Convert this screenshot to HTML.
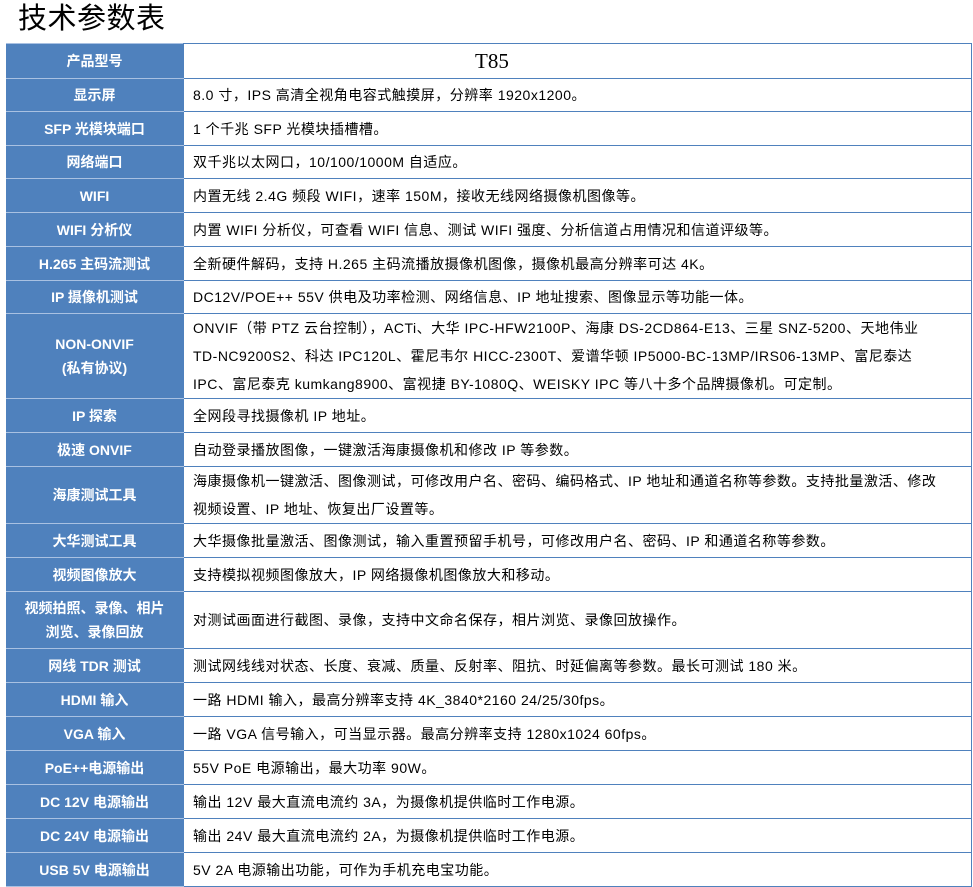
<!DOCTYPE html>
<html><head><meta charset="utf-8"><style>
body{margin:0;background:#fff;font-family:"Liberation Sans","Noto Sans CJK SC",sans-serif;}
h1{position:absolute;left:18px;top:1px;margin:0;font-size:29px;font-weight:normal;color:#000;line-height:36px;letter-spacing:0.5px;}
table{position:absolute;left:6px;top:43px;width:966px;border-collapse:collapse;table-layout:fixed;}
td{padding:0;font-size:14px;color:#000;}
td.k{width:177px;background:#4f81bd;color:#fff;font-weight:bold;text-align:center;border-top:1px solid #a9c1e2;border-bottom:1px solid #a9c1e2;border-right:1px solid #4f81bd;line-height:24px;}
td.v{border:1px solid #4f81bd;padding-left:9px;line-height:28px;letter-spacing:0.5px;white-space:nowrap;}
</style></head><body>
<h1>技术参数表</h1>
<table>
<tr style="height:35px"><td class="k">产品型号</td><td class="v" style="font-family:'Liberation Serif',serif;font-size:21px;padding-left:291px;letter-spacing:0">T85</td></tr>
<tr style="height:33px"><td class="k">显示屏</td><td class="v">8.0 寸，IPS 高清全视角电容式触摸屏，分辨率 1920x1200。</td></tr>
<tr style="height:34px"><td class="k">SFP 光模块端口</td><td class="v">1 个千兆 SFP 光模块插槽槽。</td></tr>
<tr style="height:33px"><td class="k">网络端口</td><td class="v">双千兆以太网口，10/100/1000M 自适应。</td></tr>
<tr style="height:34px"><td class="k">WIFI</td><td class="v">内置无线 2.4G 频段 WIFI，速率 150M，接收无线网络摄像机图像等。</td></tr>
<tr style="height:34px"><td class="k">WIFI 分析仪</td><td class="v">内置 WIFI 分析仪，可查看 WIFI 信息、测试 WIFI 强度、分析信道占用情况和信道评级等。</td></tr>
<tr style="height:34px"><td class="k">H.265 主码流测试</td><td class="v">全新硬件解码，支持 H.265 主码流播放摄像机图像，摄像机最高分辨率可达 4K。</td></tr>
<tr style="height:33px"><td class="k">IP 摄像机测试</td><td class="v">DC12V/POE++ 55V 供电及功率检测、网络信息、IP 地址搜索、图像显示等功能一体。</td></tr>
<tr style="height:85px"><td class="k">NON-ONVIF<br>(私有协议)</td><td class="v">ONVIF（带 PTZ 云台控制），ACTi、大华 IPC-HFW2100P、海康 DS-2CD864-E13、三星 SNZ-5200、天地伟业<br>TD-NC9200S2、科达 IPC120L、霍尼韦尔 HICC-2300T、爱谱华顿 IP5000-BC-13MP/IRS06-13MP、富尼泰达<br>IPC、富尼泰克 kumkang8900、富视捷 BY-1080Q、WEISKY IPC 等八十多个品牌摄像机。可定制。</td></tr>
<tr style="height:34px"><td class="k">IP 探索</td><td class="v">全网段寻找摄像机 IP 地址。</td></tr>
<tr style="height:34px"><td class="k">极速 ONVIF</td><td class="v">自动登录播放图像，一键激活海康摄像机和修改 IP 等参数。</td></tr>
<tr style="height:57px"><td class="k">海康测试工具</td><td class="v">海康摄像机一键激活、图像测试，可修改用户名、密码、编码格式、IP 地址和通道名称等参数。支持批量激活、修改<br>视频设置、IP 地址、恢复出厂设置等。</td></tr>
<tr style="height:34px"><td class="k">大华测试工具</td><td class="v">大华摄像批量激活、图像测试，输入重置预留手机号，可修改用户名、密码、IP 和通道名称等参数。</td></tr>
<tr style="height:34px"><td class="k">视频图像放大</td><td class="v">支持模拟视频图像放大，IP 网络摄像机图像放大和移动。</td></tr>
<tr style="height:57px"><td class="k">视频拍照、录像、相片<br>浏览、录像回放</td><td class="v">对测试画面进行截图、录像，支持中文命名保存，相片浏览、录像回放操作。</td></tr>
<tr style="height:34px"><td class="k">网线 TDR 测试</td><td class="v">测试网线线对状态、长度、衰减、质量、反射率、阻抗、时延偏离等参数。最长可测试 180 米。</td></tr>
<tr style="height:34px"><td class="k">HDMI 输入</td><td class="v">一路 HDMI 输入，最高分辨率支持 4K_3840*2160 24/25/30fps。</td></tr>
<tr style="height:34px"><td class="k">VGA 输入</td><td class="v">一路 VGA 信号输入，可当显示器。最高分辨率支持 1280x1024 60fps。</td></tr>
<tr style="height:34px"><td class="k">PoE++电源输出</td><td class="v">55V PoE 电源输出，最大功率 90W。</td></tr>
<tr style="height:34px"><td class="k">DC 12V 电源输出</td><td class="v">输出 12V 最大直流电流约 3A，为摄像机提供临时工作电源。</td></tr>
<tr style="height:34px"><td class="k">DC 24V 电源输出</td><td class="v">输出 24V 最大直流电流约 2A，为摄像机提供临时工作电源。</td></tr>
<tr style="height:34px"><td class="k">USB 5V 电源输出</td><td class="v">5V 2A 电源输出功能，可作为手机充电宝功能。</td></tr>
</table>
</body></html>
